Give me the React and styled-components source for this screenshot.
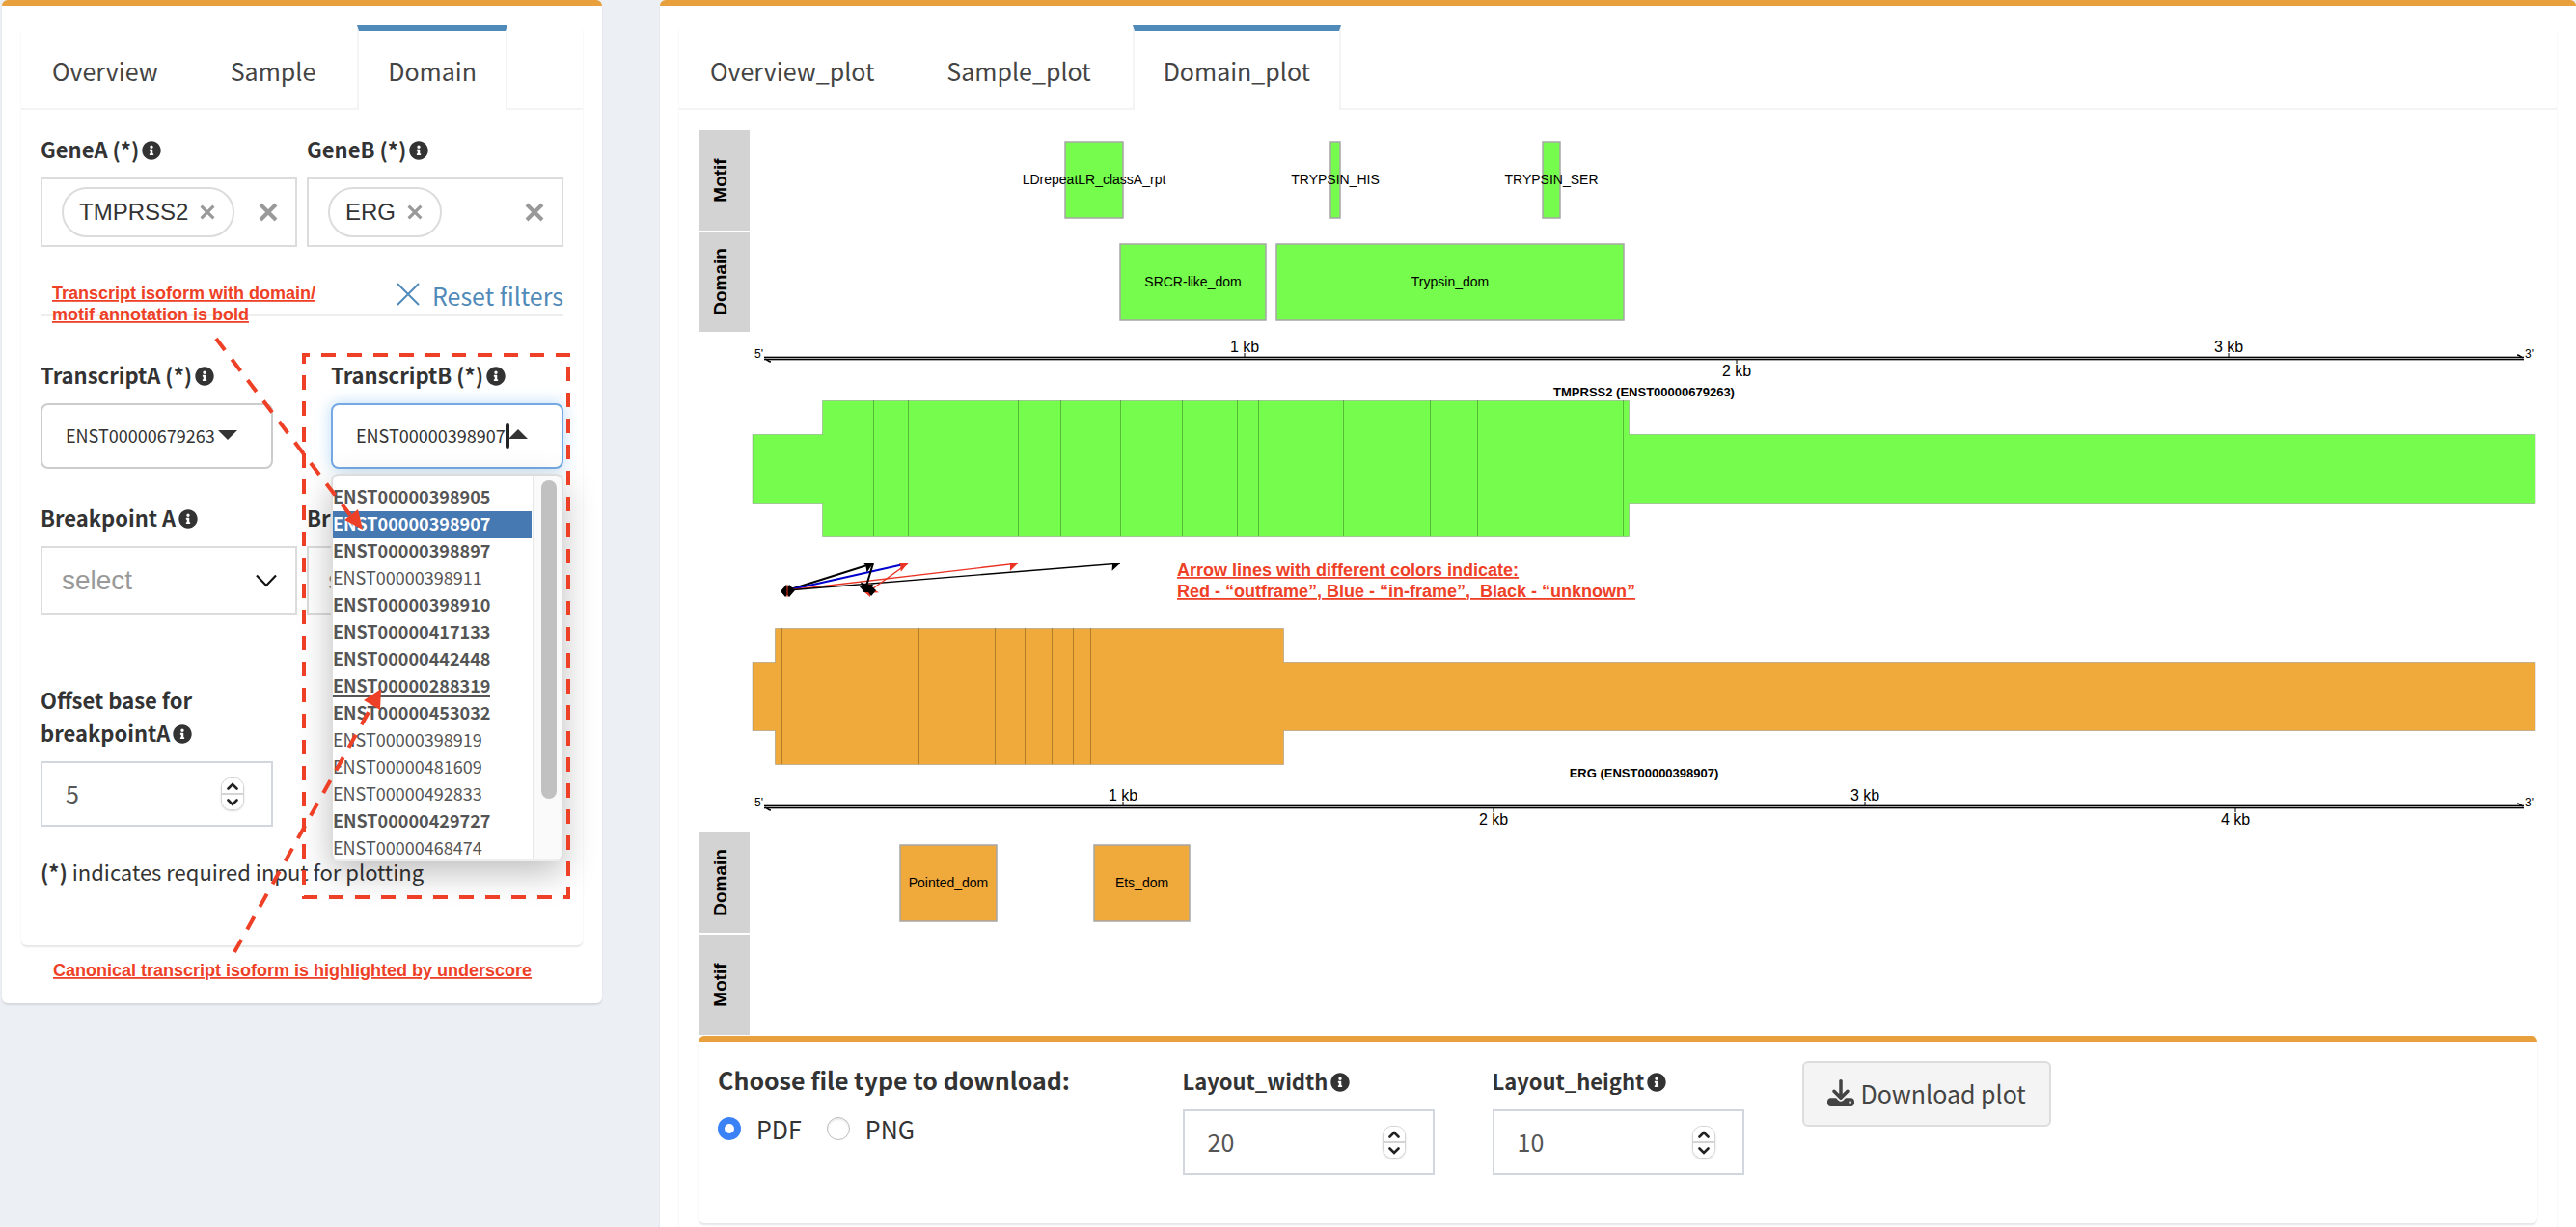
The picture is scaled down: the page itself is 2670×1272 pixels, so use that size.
import React, { useState } from "react";
import styled, { createGlobalStyle, css } from "styled-components";
import { FaInfoCircle } from "react-icons/fa";
import { FaDownload } from "react-icons/fa6";

const SANS = `"Noto Sans CJK SC", "Noto Sans", sans-serif`;
const ARIAL = `"Liberation Sans", Arial, sans-serif`;
const RED = "#ee4026";

const Global = createGlobalStyle`
  * { box-sizing: border-box; }
  html { scrollbar-width: none; }
  body { margin: 0; background: #ecf0f5; color: #333; font-family: ${SANS}; font-size: 25px; line-height: 40px; }
  button, input, select { font: inherit; color: inherit; margin: 0; }
`;

/* ---------- page and boxes ---------- */
const Page = styled.main`
  height: 100vh;
  overflow: auto;
  scrollbar-width: none;
  padding: 0 0 0 2px;
  display: grid;
  grid-template-columns: repeat(12, minmax(0, 1fr));
  column-gap: 60px;
  align-items: start;
`;

const Panel = styled.section`
  position: relative;
  grid-column: span ${(p) => p.$span};
  padding: 20px 20px 60px;
  background: #fff;
  border-top: 6px solid #e8a03c;
  border-radius: 6px;
  box-shadow: 0 2px 2px rgba(0, 0, 0, 0.1);
`;

const TabBox = styled.div`
  border-radius: 6px;
  background: #fff;
  box-shadow: 0 2px 2px rgba(0, 0, 0, 0.1);
`;

const TabBar = styled.nav`
  display: flex;
  gap: 11px;
  height: 88px;
  border-bottom: 2px solid #f4f4f4;
`;

const Tab = styled.a`
  height: 88px;
  padding: 21px 30px 0;
  border: solid transparent;
  border-width: 6px 2px 0;
  color: #444;
  text-decoration: none;
  ${(p) =>
    p.$active &&
    css`
      background: #fff;
      border-color: #508ab9 #f4f4f4 transparent;
    `}
`;

const TabBody = styled.div`
  padding: 20px;
`;

/* ---------- form parts ---------- */
const Form = styled.form`
  padding: 23px 20px 60px;
`;

const Columns = styled.div`
  display: grid;
  grid-template-columns: repeat(2, minmax(0, 1fr));
  column-gap: ${(p) => p.$gap}px;
  margin-bottom: ${(p) => p.$after}px;
`;

const Field = styled.div`
  min-width: 0;
  position: relative;
`;

const Label = styled.label`
  display: block;
  margin-bottom: 13px;
  font-size: 22px;
  font-weight: 700;
  line-height: 34px;
  svg {
    width: 20px;
    height: 20px;
    margin-left: -2px;
    vertical-align: -2px;
  }
`;

const TagBox = styled.div`
  display: flex;
  align-items: center;
  height: 72px;
  padding: 0 18px 0 20px;
  border: 2px solid #dcdcdc;
  background: #fff;
`;

const Tag = styled.span`
  display: flex;
  align-items: center;
  gap: 12px;
  height: 52px;
  padding: 0 18px 0 16px;
  border: 2px solid #dcdcdc;
  border-radius: 26px;
  font-family: ${ARIAL};
  font-size: 24px;
`;

const TagInput = styled.input`
  flex: 1;
  width: 0;
  min-width: 0;
  height: 40px;
  padding: 0;
  border: 0;
  outline: 0;
  background: transparent;
`;

const ClearButton = styled.button`
  display: flex;
  padding: 0;
  border: 0;
  background: none;
  color: #999;
`;

const ResetRow = styled.div`
  display: flex;
  justify-content: flex-end;
  height: 72px;
  margin-bottom: 43px;
  padding-top: 30px;
  border-bottom: 2px solid #eee;
`;

const ResetLink = styled.a`
  display: flex;
  gap: 13px;
  color: #508ab9;
  text-decoration: none;
  svg {
    margin-top: 7px;
  }
`;

const SelectWrap = styled.div`
  position: relative;
`;

const PickSelect = styled.select`
  appearance: none;
  display: block;
  width: 100%;
  height: 68px;
  padding: 0 24px 2px;
  border: 2px solid #ccc;
  border-radius: 8px;
  background: #fff;
  font-size: 18px;
`;

const PlainSelect = styled.select`
  appearance: none;
  display: block;
  width: 100%;
  height: 72px;
  padding: 0 20px;
  border: 2px solid #dcdcdc;
  border-radius: 0;
  background: #fff;
  color: #999;
  font-family: ${ARIAL};
  font-size: 28px;
`;

const Glyph = styled.svg`
  position: absolute;
  right: ${(p) => p.$right}px;
  top: ${(p) => p.$top}px;
  pointer-events: none;
`;

const ComboInput = styled.input`
  display: block;
  width: 100%;
  height: 68px;
  padding: 0 24px 2px;
  border: 2px solid #74a9e3;
  border-radius: 8px;
  outline: 0;
  background: #fff;
  box-shadow: 0 0 16px rgba(102, 175, 233, 0.45);
  font-size: 18px;
`;

const Caret = styled.span`
  position: absolute;
  right: 56px;
  top: 21px;
  width: 4px;
  height: 26px;
  border-radius: 2px;
  background: #222;
`;

const Menu = styled.div`
  position: absolute;
  z-index: 2;
  top: 120px;
  left: 0;
  right: 0;
  display: flex;
  height: 402px;
  overflow: hidden;
  border: 2px solid #ddd;
  border-bottom-color: #eee;
  border-radius: 8px;
  background: #fff;
  box-shadow: 0 12px 34px rgba(0, 0, 0, 0.25);
`;

const Options = styled.ul`
  flex: 1;
  margin: 0;
  padding: 9px 0 0;
  list-style: none;
`;

const Option = styled.li`
  display: flex;
  align-items: flex-start;
  height: 28px;
  font-size: 18px;
  line-height: 24px;
  color: ${(p) => (p.$selected ? "#fff" : "#555")};
  background: ${(p) => (p.$selected ? "#4678b2" : "transparent")};
  font-weight: ${(p) => (p.$bold ? 700 : 400)};
  span {
    height: 25px;
    border-bottom: 2px solid ${(p) => (p.$canonical ? "#555" : "transparent")};
  }
`;

const ScrollTrack = styled.div`
  width: 30px;
  margin-left: 1px;
  padding: 5px 5px 0 7px;
  border-left: 2px solid #e8e8e8;
  background: #fafafa;
`;

const ScrollThumb = styled.div`
  height: 330px;
  border-radius: 8px;
  background: #c1c1c1;
`;

const NumberBox = styled.div`
  display: flex;
  align-items: center;
  height: 68px;
  padding: 0 28px 0 24px;
  border: 2px solid #d2d6de;
  background: #fff;
  color: #555;
`;

const NumberInput = styled.input`
  flex: 1;
  min-width: 0;
  height: 40px;
  padding: 0 0 3px;
  border: 0;
  outline: 0;
  background: transparent;
  appearance: textfield;
  &::-webkit-inner-spin-button {
    display: none;
  }
`;

const Spinner = styled.span`
  display: flex;
  flex-direction: column;
  width: 24px;
  height: 34px;
  overflow: hidden;
  border: 1px solid #d4d4d4;
  border-radius: 10px;
  box-shadow: 0 1px 2px rgba(0, 0, 0, 0.15);
`;

const SpinButton = styled.button`
  flex: 1;
  display: flex;
  align-items: center;
  justify-content: center;
  padding: 0;
  border: 0;
  background: #fff;
  &:first-child {
    border-bottom: 2px solid #d4d4d4;
  }
`;

const Note = styled.p`
  margin: 0;
  font-size: 22px;
  line-height: 34px;
`;

const Overlay = styled.svg`
  position: absolute;
  z-index: 3;
  inset: 0;
  width: 100%;
  height: 100%;
  pointer-events: none;
`;

/* ---------- plot and download ---------- */
const Plot = styled.svg`
  display: block;
  width: 100%;
  height: auto;
  font-family: ${ARIAL};
`;

const DownloadBox = styled.form`
  display: grid;
  grid-template-columns: repeat(12, minmax(0, 1fr));
  column-gap: 60px;
  align-items: start;
  padding: 20px 20px 50px;
  border-top: 6px solid #e8a03c;
  border-radius: 6px;
  box-shadow: 0 2px 2px rgba(0, 0, 0, 0.1);
`;

const Cell = styled.div`
  grid-column: span ${(p) => p.$span};
  padding-top: ${(p) => p.$top || 0}px;
`;

const Choices = styled.fieldset`
  margin: 0;
  padding: 0;
  border: 0;
  legend {
    padding: 0;
    margin-bottom: 12px;
    font-weight: 700;
    line-height: 38px;
  }
`;

const RadioRow = styled.div`
  display: flex;
  gap: 26px;
`;

const RadioLabel = styled.label`
  display: flex;
  align-items: center;
  gap: 16px;
`;

const Radio = styled.input`
  appearance: none;
  width: 24px;
  height: 24px;
  border: 1px solid #bbb;
  border-radius: 50%;
  background: #fff;
  box-shadow: inset 0 2px 2px rgba(0, 0, 0, 0.08);
  &:checked {
    border: 7px solid #3b82f7;
    box-shadow: none;
  }
`;

const DownloadButton = styled.button`
  display: flex;
  align-items: center;
  gap: 7px;
  height: 68px;
  padding: 0 24px 2px;
  border: 2px solid #ddd;
  border-radius: 6px;
  background: #f4f4f4;
  color: #444;
  svg {
    width: 28px;
    height: 28px;
  }
`;

/* ---------- data ---------- */
const transcripts = [
  ["ENST00000398905", true],
  ["ENST00000398907", true],
  ["ENST00000398897", true],
  ["ENST00000398911", false],
  ["ENST00000398910", true],
  ["ENST00000417133", true],
  ["ENST00000442448", true],
  ["ENST00000288319", true],
  ["ENST00000453032", true],
  ["ENST00000398919", false],
  ["ENST00000481609", false],
  ["ENST00000492833", false],
  ["ENST00000429727", true],
  ["ENST00000468474", false],
];
const canonical = "ENST00000288319";

const GREEN = "#75fc4c";
const ORANGE = "#f0a93b";

const features = [
  { x: 1104, w: 60, y: 147, fill: GREEN, name: "LDrepeatLR_classA_rpt" },
  { x: 1379, w: 10, y: 147, fill: GREEN, name: "TRYPSIN_HIS" },
  { x: 1599, w: 18, y: 147, fill: GREEN, name: "TRYPSIN_SER" },
  { x: 1161, w: 151, y: 253, fill: GREEN, name: "SRCR-like_dom" },
  { x: 1323, w: 360, y: 253, fill: GREEN, name: "Trypsin_dom" },
  { x: 933, w: 100, y: 876, fill: ORANGE, name: "Pointed_dom" },
  { x: 1134, w: 99, y: 876, fill: ORANGE, name: "Ets_dom" },
];

const strips = [
  { y: 135, name: "Motif" },
  { y: 240, name: "Domain" },
  { y: 863, name: "Domain" },
  { y: 969, name: "Motif" },
];

const arrows = [
  { from: [816, 612], to: [905, 584], color: "#000", w: 2 },
  { from: [816, 612], to: [941, 584], color: "#00c", w: 2, head: "#ea3323" },
  { from: [816, 612], to: [1055, 584], color: "#ea3323", w: 1.4 },
  { from: [816, 612], to: [1161, 584], color: "#000", w: 1.4 },
  { from: [941, 584], to: [898, 615], color: "#ea3323", w: 1.4 },
  { from: [905, 584], to: [896, 614], color: "#000", w: 2 },
];

/* ---------- components ---------- */
function Info() {
  return <FaInfoCircle aria-hidden="true" />;
}

function Cross({ size, weight }) {
  return (
    <svg width={size} height={size} viewBox="0 0 20 20">
      <path d="M2 2 18 18M18 2 2 18" stroke="currentColor" strokeWidth={weight} />
    </svg>
  );
}

function GeneField({ id, label, value }) {
  return (
    <Field>
      <Label htmlFor={id}>
        {label} <Info />
      </Label>
      <TagBox>
        <Tag>
          {value}
          <ClearButton type="button" aria-label={`Remove ${value}`}>
            <Cross size={16} weight={4} />
          </ClearButton>
        </Tag>
        <TagInput id={id} />
        <ClearButton type="button" aria-label="Clear all">
          <Cross size={20} weight={4} />
        </ClearButton>
      </TagBox>
    </Field>
  );
}

function BreakpointField({ id, label }) {
  return (
    <Field>
      <Label htmlFor={id}>
        {label} <Info />
      </Label>
      <SelectWrap>
        <PlainSelect id={id}>
          <option>select</option>
        </PlainSelect>
        <Glyph $right={20} $top={29} width="24" height="14" viewBox="0 0 24 14">
          <path d="M2 1.5 12 12 22 1.5" fill="none" stroke="#111" strokeWidth="2.2" />
        </Glyph>
      </SelectWrap>
    </Field>
  );
}

function NumberField({ id, label, initial }) {
  const [value, setValue] = useState(initial);
  return (
    <Field>
      <Label htmlFor={id}>
        {label} <Info />
      </Label>
      <NumberBox>
        <NumberInput id={id} type="number" value={value} onChange={(e) => setValue(Number(e.target.value))} />
        <Spinner>
          <SpinButton type="button" aria-label="Increase" onClick={() => setValue(value + 1)}>
            <svg width="12" height="8" viewBox="0 0 12 8">
              <path d="M1.5 6.5 6 2l4.500 4.500" fill="none" stroke="#222" strokeWidth="2.600" strokeLinecap="round" />
            </svg>
          </SpinButton>
          <SpinButton type="button" aria-label="Decrease" onClick={() => setValue(value - 1)}>
            <svg width="12" height="8" viewBox="0 0 12 8">
              <path d="M1.500 1.500 6 6l4.500-4.500" fill="none" stroke="#222" strokeWidth="2.600" strokeLinecap="round" />
            </svg>
          </SpinButton>
        </Spinner>
      </NumberBox>
    </Field>
  );
}

function TranscriptMenu() {
  return (
    <Menu>
      <Options role="listbox" aria-label="TranscriptB">
        {transcripts.map(([id, bold]) => (
          <Option
            key={id}
            role="option"
            aria-selected={id === "ENST00000398907"}
            $bold={bold}
            $selected={id === "ENST00000398907"}
            $canonical={id === canonical}
          >
            <span>{id}</span>
          </Option>
        ))}
      </Options>
      <ScrollTrack>
        <ScrollThumb />
      </ScrollTrack>
    </Menu>
  );
}

function Callouts() {
  const text = {
    fill: RED,
    fontFamily: ARIAL,
    fontSize: 18,
    fontWeight: 700,
    textDecoration: "underline",
  };
  return (
    <Overlay viewBox="2 6 622 1034">
      <text x="54" y="310" {...text}>Transcript isoform with domain/</text>
      <text x="54" y="332" {...text}>motif annotation is bold</text>
      <text x="55" y="1012" {...text}>Canonical transcript isoform is highlighted by underscore</text>
      <g fill="none" stroke={RED} strokeWidth="4" strokeDasharray="15 12">
        <path d="M591 368H315V930H589V368" />
        <path d="M224 351 363 534" />
        <path d="M243 987 386 731" />
      </g>
      <path d="M357 539 371 528 376 549ZM377 726 395 714 394 736Z" fill={RED} />
    </Overlay>
  );
}

function Axis({ y, ticks, titleY, title }) {
  return (
    <g>
      <rect x="792" y={y} width="1824" height="5" fill="#aaa" />
      <path d={`M792 ${y + 1.5}H2616M792 ${y + 3.5}H2616`} stroke="#000" />
      <path d={`M793 ${y + 3}l6 3h-2zM2615 ${y + 2}l-6-3h2z`} stroke="#000" />
      <text x="782" y={y + 2} fontSize="12">5'</text>
      <text x="2617" y={y + 2} fontSize="12">3'</text>
      {ticks.map((x, i) => (
        <g key={x}>
          <path d={i % 2 ? `M${x} ${y + 4}v4` : `M${x} ${y + 1}v-4`} stroke="#000" strokeWidth="1" />
          <text x={x} y={i % 2 ? y + 21 : y - 4} fontSize="16" textAnchor="middle">{`${i + 1} kb`}</text>
        </g>
      ))}
      <text x="1704" y={titleY} fontSize="13" fontWeight="700" textAnchor="middle">{title}</text>
    </g>
  );
}

function Transcript({ outline, fill, lines, top }) {
  return (
    <g>
      <path d={outline} fill={fill} stroke="#777" strokeOpacity="0.4" />
      {lines.map((x) => (
        <path key={x} d={`M${x} ${top}v141`} stroke="#000" strokeOpacity="0.26" />
      ))}
    </g>
  );
}

function Arrow({ from, to, color, w, head }) {
  const angle = (Math.atan2(to[1] - from[1], to[0] - from[0]) * 180) / Math.PI;
  return (
    <g>
      <path d={`M${from} L${to}`} stroke={color} strokeWidth={w} />
      <path d="M0 0-11-7-8 0-9 7Z" transform={`translate(${to}) rotate(${angle})`} fill={head || color} />
    </g>
  );
}

function DomainPlot() {
  return (
    <Plot viewBox="724 134 1906 940" role="img" aria-label="Domain plot">
      <defs>
        <clipPath id="gap">
          <rect x="780" y="584" width="1850" height="40" />
        </clipPath>
      </defs>
      {strips.map((s) => (
        <g key={s.y}>
          <rect x="725" y={s.y} width="52" height="104" fill="#d3d3d3" />
          <text transform={`translate(753 ${s.y + 52}) rotate(-90)`} fontSize="19" fontWeight="700" textAnchor="middle">
            {s.name}
          </text>
        </g>
      ))}
      {features.map((f) => (
        <g key={f.name}>
          <rect x={f.x} y={f.y} width={f.w} height="79" fill={f.fill} stroke="#a6a6a6" strokeWidth="1.5" />
          <text x={f.x + f.w / 2} y={f.y + 44} fontSize="14" textAnchor="middle">
            {f.name}
          </text>
        </g>
      ))}
      <Axis y={369} ticks={[1290, 1800, 2310]} titleY={411} title="TMPRSS2 (ENST00000679263)" />
      <Transcript
        fill={GREEN}
        top={415}
        outline="M780 450.500H852.500V415.500H1688.500V450.500H2628V521.500H1688.500V556.500H852.500V521.500H780Z"
        lines={[905.5, 941.5, 1055.5, 1099.5, 1161.5, 1225.5, 1282.5, 1304.5, 1392.5, 1482.5, 1531.5, 1604.5, 1682.5]}
      />
      <g clipPath="url(#gap)">
        {arrows.map((a, i) => (
          <Arrow key={i} {...a} />
        ))}
      </g>
      <path d="M809 613 815 606 816 609 818 606 824 612 818 619 816 617 814 619Z" fill="#000" />
      <path d="M816 606V619" stroke="#ea3323" />
      <path d="M895 613 902 615 902 619Z" fill="#ea3323" />
      <path d="M890 607 897 609 902 606 908 612 903 618 900 614 896 614Z" fill="#000" />
      <g fill={RED} fontSize="18" fontWeight="700" textDecoration="underline">
        <text x="1220" y="597">Arrow lines with different colors indicate:</text>
        <text x="1220" y="619">{"Red - “outframe”, Blue - “in-frame”,\u00a0 Black - “unknown”"}</text>
      </g>
      <Transcript
        fill={ORANGE}
        top={651}
        outline="M780 686.500H803.500V651.500H1330.500V686.500H2628V757.500H1330.500V792.500H803.500V757.500H780Z"
        lines={[810.5, 894.5, 952.5, 1031.5, 1062.5, 1090.5, 1112.5, 1130.5]}
      />
      <Axis y={834} ticks={[1164, 1548, 1933, 2317]} titleY={806} title="ERG (ENST00000398907)" />
    </Plot>
  );
}

function FilterPanel() {
  return (
    <Panel $span={3}>
      <TabBox>
        <TabBar>
          <Tab href="#overview">Overview</Tab>
          <Tab href="#sample">Sample</Tab>
          <Tab href="#domain" $active>Domain</Tab>
        </TabBar>
        <Form>
          <Columns $gap={10} $after={0}>
            <GeneField id="geneA" label="GeneA (*)" value="TMPRSS2" />
            <GeneField id="geneB" label="GeneB (*)" value="ERG" />
          </Columns>
          <ResetRow>
            <ResetLink href="#reset">
              <svg width="24" height="24" viewBox="0 0 24 24">
                <path d="M1 1 23 23M23 1 1 23" stroke="currentColor" strokeWidth="2" />
              </svg>
              Reset filters
            </ResetLink>
          </ResetRow>
          <Columns $gap={60} $after={33}>
            <Field>
              <Label htmlFor="transcriptA">
                TranscriptA (*) <Info />
              </Label>
              <SelectWrap>
                <PickSelect id="transcriptA">
                  <option>ENST00000679263</option>
                </PickSelect>
                <Glyph $right={37} $top={28} width="20" height="10" viewBox="0 0 20 10">
                  <path d="M0 0H20L10 10Z" fill="#333" />
                </Glyph>
              </SelectWrap>
            </Field>
            <Field>
              <Label htmlFor="transcriptB">
                TranscriptB (*) <Info />
              </Label>
              <SelectWrap>
                <ComboInput id="transcriptB" type="text" role="combobox" aria-expanded="true" defaultValue="ENST00000398907" />
                <Caret />
                <Glyph $right={37} $top={27} width="20" height="10" viewBox="0 0 20 10">
                  <path d="M0 10H20L10 0Z" fill="#333" />
                </Glyph>
              </SelectWrap>
              <TranscriptMenu />
            </Field>
          </Columns>
          <Columns $gap={10} $after={70}>
            <BreakpointField id="breakA" label="Breakpoint A" />
            <BreakpointField id="breakB" label="Breakpoint B" />
          </Columns>
          <Columns $gap={60} $after={29}>
            <NumberField id="offsetA" label="Offset base for breakpointA" initial={5} />
          </Columns>
          <Note>
            <strong>(*)</strong> indicates required input for plotting
          </Note>
        </Form>
      </TabBox>
      <Callouts />
    </Panel>
  );
}

function PlotPanel() {
  return (
    <Panel $span={9}>
      <TabBox>
        <TabBar>
          <Tab href="#overview-plot">Overview_plot</Tab>
          <Tab href="#sample-plot">Sample_plot</Tab>
          <Tab href="#domain-plot" $active>Domain_plot</Tab>
        </TabBar>
        <TabBody>
          <DomainPlot />
          <DownloadBox>
            <Cell $span={3}>
              <Choices>
                <legend>Choose file type to download:</legend>
                <RadioRow>
                  <RadioLabel>
                    <Radio type="radio" name="filetype" value="pdf" defaultChecked />
                    PDF
                  </RadioLabel>
                  <RadioLabel>
                    <Radio type="radio" name="filetype" value="png" />
                    PNG
                  </RadioLabel>
                </RadioRow>
              </Choices>
            </Cell>
            <Cell $span={2} $top={3}>
              <NumberField id="layoutWidth" label="Layout_width" initial={20} />
            </Cell>
            <Cell $span={2} $top={3}>
              <NumberField id="layoutHeight" label="Layout_height" initial={10} />
            </Cell>
            <Cell $span={5}>
              <DownloadButton type="button">
                <FaDownload /> Download plot
              </DownloadButton>
            </Cell>
          </DownloadBox>
        </TabBody>
      </TabBox>
    </Panel>
  );
}

export default function App() {
  return (
    <>
      <Global />
      <Page>
        <FilterPanel />
        <PlotPanel />
      </Page>
    </>
  );
}
